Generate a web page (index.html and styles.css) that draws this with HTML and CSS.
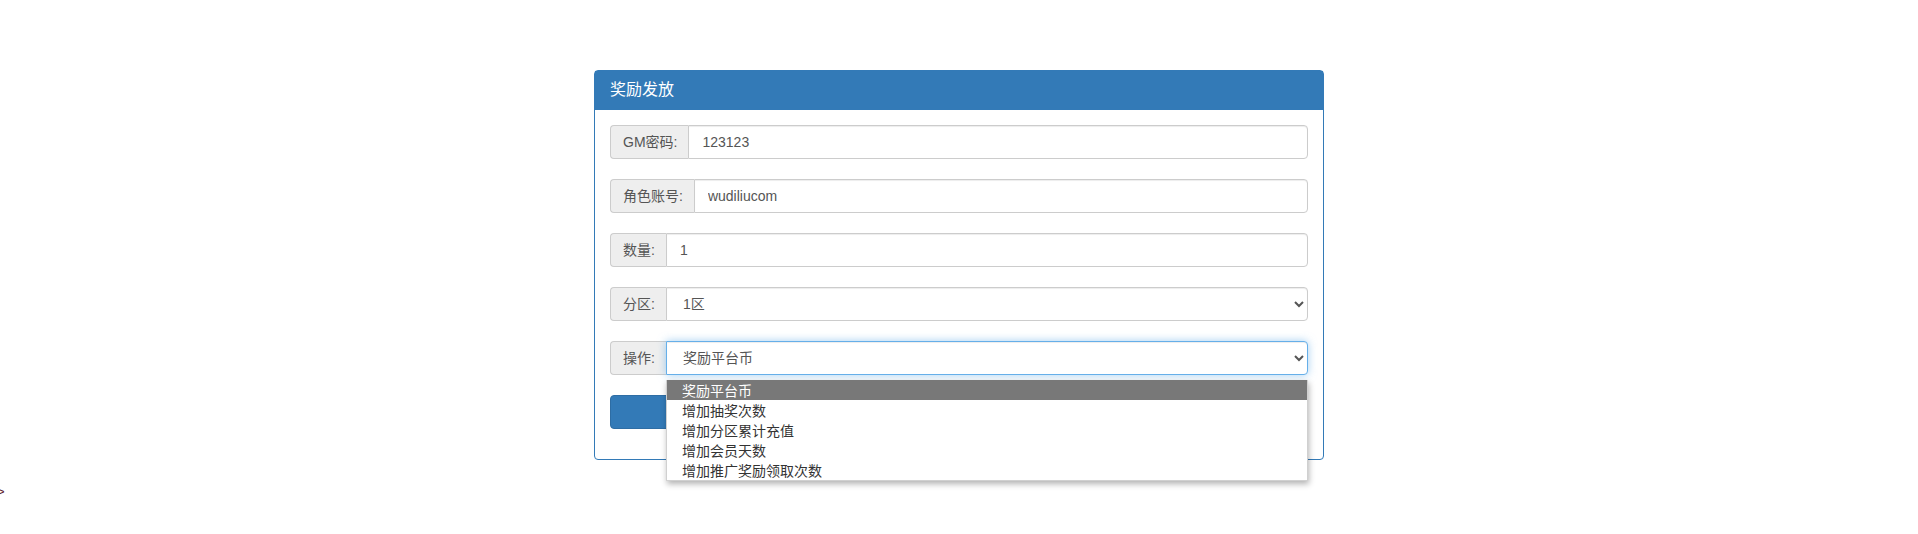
FILE: index.html
```html
<!DOCTYPE html>
<html lang="zh-CN">
<head>
    <meta charset="UTF-8">
    <meta name="viewport" content="width=device-width, initial-scale=1.0">
    <title>奖励发放</title>
    <link rel="stylesheet" href="styles.css">
</head>
<body>

<div class="container">
    <div class="panel">
        <div class="panel-heading">奖励发放</div>
        <div class="panel-body">
            <form>
                <div class="input-group">
                    <span class="addon">GM密码:</span>
                    <input class="form-control" type="text" value="123123">
                </div>
                <div class="input-group">
                    <span class="addon">角色账号:</span>
                    <input class="form-control" type="text" value="wudiliucom">
                </div>
                <div class="input-group">
                    <span class="addon">数量:</span>
                    <input class="form-control" type="text" value="1">
                </div>
                <div class="input-group">
                    <span class="addon">分区:</span>
                    <select class="form-control">
                        <option>1区</option>
                    </select>
                </div>
                <div class="input-group">
                    <span class="addon">操作:</span>
                    <div class="select-wrap">
                        <select class="form-control is-focus">
                            <option>奖励平台币</option>
                            <option>增加抽奖次数</option>
                            <option>增加分区累计充值</option>
                            <option>增加会员天数</option>
                            <option>增加推广奖励领取次数</option>
                        </select>
                        <!-- opened option list -->
                        <ul class="option-list">
                            <li class="active">奖励平台币</li>
                            <li>增加抽奖次数</li>
                            <li>增加分区累计充值</li>
                            <li>增加会员天数</li>
                            <li>增加推广奖励领取次数</li>
                        </ul>
                    </div>
                </div>
                <button type="button" class="btn-primary">提交</button>
            </form>
        </div>
    </div>
</div>

<div class="stray">&gt;</div>

</body>
</html>
```

FILE: styles.css
```css
body { margin: 0; background: #fff; color: #333; font-family: "Liberation Sans", Arial, "Noto Sans CJK SC", sans-serif; font-size: 14px; line-height: 20px; }
.container { width: 730px; margin: 70px auto 0; }

.panel { border: 1px solid #337ab7; border-radius: 4px; background: #fff; }
.panel-heading { background: #337ab7; color: #fff; font-size: 16px; line-height: 20px; padding: 9px 15px 10px; }
.panel-body { padding: 15px; }

.input-group { display: flex; height: 34px; margin-bottom: 20px; }
.addon { display: block; padding: 6px 11px 6px 12px; background: #eee; border: 1px solid #ccc; border-right: 0; border-radius: 4px 0 0 4px; color: #555; white-space: nowrap; }
.form-control { flex: 1; min-width: 0; height: 34px; box-sizing: border-box; margin: 0; padding: 6px 13px; border: 1px solid #ccc; border-radius: 0 4px 4px 0; background: #fff; color: #555; font: inherit; box-shadow: inset 0 1px 1px rgba(0,0,0,.075); outline: none; }
select.form-control { padding-left: 12px; }
.form-control.is-focus { border-color: #66afe9; box-shadow: inset 0 1px 1px rgba(0,0,0,.075), 0 0 8px rgba(102,175,233,.6); }

.select-wrap { position: relative; flex: 1; display: flex; }
.select-wrap .form-control { width: 100%; }

.option-list { position: absolute; top: 39px; left: 0; right: 0; z-index: 5; margin: 0; padding: 0; list-style: none; background: #fff; border: 1px solid #d0d0d0; border-top: 0; box-shadow: 1px 3px 6px rgba(0,0,0,.3); }
.option-list li { height: 20px; line-height: 20px; padding-left: 15px; color: #333; font-family: "Noto Sans CJK SC", sans-serif; font-size: 14px; }
.option-list li.active { background: #787878; color: #fff; }

.btn-primary { display: block; width: 100%; height: 34px; margin: 0 0 15px; border: 1px solid #2e6da4; border-radius: 4px; background: #337ab7; color: #fff; font: inherit; }

.stray { margin-top: 23px; font-size: 13px; line-height: 18px; text-indent: -3px; color: #5a1a2a; }
```
